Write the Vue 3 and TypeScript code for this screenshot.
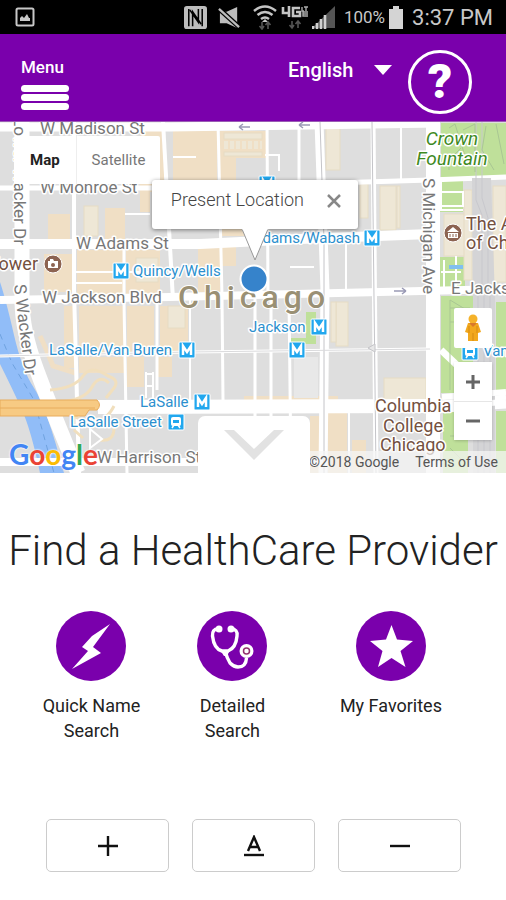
<script setup lang="ts">
import { ref } from 'vue'

type Rect = [number, number, number, number]
interface Label { text: string; x: number; y: number; kind: string; anchor?: string }

const language = ref('English')
const popupOpen = ref(true)
const mapType = ref('Map')

const peach: Rect[] = [
  [173, 131, 44, 49], [220, 131, 46, 27], [220, 158, 16, 22], [140, 130, 24, 62],
  [48, 214, 22, 26], [105, 208, 20, 32], [140, 190, 10, 22], [44, 254, 28, 38],
  [77, 250, 48, 45], [126, 250, 34, 45], [198, 246, 22, 46], [222, 246, 14, 20],
  [222, 228, 46, 8], [64, 306, 12, 62], [79, 306, 45, 48], [79, 357, 45, 16],
  [127, 306, 27, 48], [127, 357, 17, 30], [160, 306, 28, 48], [244, 396, 78, 5],
  [326, 396, 12, 5], [310, 416, 10, 57], [328, 412, 19, 61], [352, 440, 14, 33],
  [158, 357, 14, 20],
]
const cream: Rect[] = [
  [224, 133, 38, 6], [224, 152, 38, 4], [326, 128, 14, 42], [360, 184, 8, 34],
  [380, 186, 16, 44], [397, 186, 3, 42], [84, 206, 14, 30], [168, 306, 17, 22],
  [336, 302, 12, 44], [384, 378, 42, 22], [444, 214, 26, 42], [464, 190, 8, 90],
  [493, 186, 13, 96], [331, 302, 5, 40], [136, 258, 22, 24],
]
const green: Rect[] = [
  [441, 123, 65, 54], [440, 180, 23, 32], [440, 257, 25, 30], [441, 296, 33, 97],
  [443, 411, 25, 62], [496, 302, 10, 92], [496, 411, 10, 62], [291, 338, 25, 6], [306, 312, 10, 32],
]

const roads: { d: string; w: number }[] = [
  { d: 'M0 127H170L440 123', w: 9 },
  { d: 'M0 188H150L300 184L430 180L506 177', w: 5 },
  { d: 'M0 244H200L300 239L430 234', w: 10 },
  { d: 'M0 300L170 297L506 289', w: 8 },
  { d: 'M0 356L190 352L430 349', w: 3 },
  { d: 'M98 407L430 406', w: 14 },
  { d: 'M430 404L506 397M430 411L506 406', w: 5 },
  { d: 'M0 462H320', w: 8 },
  { d: 'M22 122V300Q22 330 36 368T78 473', w: 15 },
  { d: 'M74 122V290L79 473', w: 4 },
  { d: 'M124 246V302L127 473', w: 3 },
  { d: 'M76 272H160M76 283H122M125 214H150', w: 2 },
  { d: 'M163 122L173 300', w: 4 },
  { d: 'M157 298V390', w: 3 },
  { d: 'M218 122L222 296L223 400', w: 3 },
  { d: 'M190 300V400', w: 2 },
  { d: 'M267 122L268 296', w: 3 },
  { d: 'M255 298V473M271 298V473M289 298L291 473', w: 3 },
  { d: 'M299 122V180', w: 3 },
  { d: 'M319 122L325 290L323 473', w: 9 },
  { d: 'M373 122L376 473', w: 5 },
  { d: 'M401 124V180M346 244V290M349 410V473', w: 2 },
  { d: 'M433 122V473', w: 14 },
  { d: 'M441 350L460 368', w: 7 },
  { d: 'M146 372V398M153 372V398M146 374H154M146 386H154', w: 2 },
  { d: 'M173 157H196M265 155H279V171M290 267H314', w: 2 },
]

const labels: Label[] = [
  { text: 'W Madison St', x: 40, y: 134, kind: 'street' },
  { text: 'W Monroe St', x: 40, y: 193, kind: 'street' },
  { text: 'W Adams St', x: 76, y: 249, kind: 'street' },
  { text: 'W Jackson Blvd', x: 42, y: 303, kind: 'street' },
  { text: 'W Harrison St', x: 97, y: 463, kind: 'street' },
  { text: 'E Jackson Dr', x: 451, y: 294, kind: 'street' },
  { text: 'Willis Tower', x: 38, y: 270, kind: 'place', anchor: 'end' },
  { text: 'The Art Institute', x: 466, y: 230, kind: 'place' },
  { text: 'of Chicago', x: 466, y: 249, kind: 'place' },
  { text: 'Columbia', x: 375, y: 412, kind: 'place' },
  { text: 'College', x: 383, y: 432, kind: 'place' },
  { text: 'Chicago', x: 380, y: 451, kind: 'place' },
  { text: 'Crown', x: 452, y: 145, kind: 'park', anchor: 'middle' },
  { text: 'Fountain', x: 452, y: 165, kind: 'park', anchor: 'middle' },
  { text: 'Quincy/Wells', x: 133, y: 276, kind: 'transit' },
  { text: 'Adams/Wabash', x: 360, y: 243, kind: 'transit', anchor: 'end' },
  { text: 'Jackson', x: 249, y: 332, kind: 'transit' },
  { text: 'LaSalle/Van Buren', x: 49, y: 355, kind: 'transit' },
  { text: 'LaSalle', x: 140, y: 407, kind: 'transit' },
  { text: 'LaSalle Street', x: 70, y: 427, kind: 'transit' },
  { text: 'Van Buren', x: 483, y: 356, kind: 'transit' },
]

const metros: [number, number][] = [[121, 271], [372, 238], [319, 327], [297, 350], [187, 350], [202, 402], [267, 184]]
const trains: [number, number][] = [[176, 422], [470, 352]]
</script>

<template>
  <div class="screen">
    <div class="status">
      <svg class="shot" viewBox="0 0 20 20" aria-hidden="true">
        <rect x="1.5" y="1.5" width="17" height="17" rx="1.5" fill="none" stroke="#c8c8c8" stroke-width="2" />
        <path d="M5 14V11l2-2 2 2 3-4 2 4 1 0v3z" fill="#c8c8c8" />
      </svg>
      <svg class="nfc" viewBox="0 0 24 24" aria-hidden="true">
        <rect x="0" y="0" width="24" height="24" rx="3" fill="#bdbdbd" />
        <path d="M5 3v18M19 3v18" stroke="#000" stroke-width="1.6" />
        <path d="M9 21V6l9 13M15 3v14L6 4" fill="none" stroke="#000" stroke-width="1.6" />
      </svg>
      <svg class="mute" viewBox="0 0 24 24" aria-hidden="true">
        <path d="M2 6h7l11-5v22L9 18H2z" fill="#bdbdbd" />
        <path d="M1 3l21 19" stroke="#000" stroke-width="5" />
        <path d="M1 3l21 19" stroke="#bdbdbd" stroke-width="2.4" />
      </svg>
      <svg class="wifi" viewBox="0 0 24 26" aria-hidden="true">
        <path d="M1 7q11-9 22 0M4.500 11q7.500-6 15 0M8 15q4-3 8 0" fill="none" stroke="#c4c4c4" stroke-width="2.5" />
        <path d="M9 18h6l-3-3z" fill="#c4c4c4" />
        <path d="M9 18v7M6.500 22l2.500 3 2-3M15 25v-7M12.500 21l2.500-3 2.500 3" fill="none" stroke="#555" stroke-width="1.6" />
      </svg>
      <svg class="lte" viewBox="0 0 28 26" aria-hidden="true">
        <path d="M2 3v6h7M8 2v11M19 4h-7v8h7V8h-4" fill="none" stroke="#c4c4c4" stroke-width="2.6" />
        <path d="M21 3v4h2M23 3h4M25 3v4M27 8h-5v4h5M22 10h5" fill="none" stroke="#aaa" stroke-width="1.4" />
        <path d="M11 17v7M8.500 21l2.500 3 2-3M17 24v-7M14.500 20l2.500-3 2.500 3" fill="none" stroke="#555" stroke-width="1.6" />
      </svg>
      <svg class="signal" viewBox="0 0 24 24" aria-hidden="true">
        <path d="M0 23L23 1V23z" fill="#555" />
        <path d="M1 21v3M5 18v6M9 14v10M13 10v14" stroke="#d0d0d0" stroke-width="2.6" />
      </svg>
      <span class="percent">100%</span>
      <svg class="battery" viewBox="0 0 14 23" aria-hidden="true">
        <path d="M4 0h6v3h4v20H0V3h4z" fill="#d4d4d4" />
      </svg>
      <span class="clock">3:37 PM</span>
    </div>

    <header class="bar">
      <button class="menu" type="button">
        <span>Menu</span>
        <span class="lines" aria-hidden="true"><i></i><i></i><i></i></span>
      </button>
      <div class="lang">
        <select v-model="language" aria-label="Language">
          <option>English</option>
        </select>
        <svg viewBox="0 0 18 10" aria-hidden="true"><path d="M0 0h18L9 10z" fill="#fff" /></svg>
      </div>
      <button class="help" type="button">?</button>
    </header>

    <section class="map">
      <svg class="tiles" viewBox="0 122 506 351" preserveAspectRatio="xMidYMid slice">
        <rect x="0" y="122" width="506" height="351" fill="#dedede" />
        <rect v-for="(r, i) in peach" :key="'p' + i" :x="r[0]" :y="r[1]" :width="r[2]" :height="r[3]" fill="#f0dfc5" />
        <rect v-for="(r, i) in green" :key="'g' + i" :x="r[0]" :y="r[1]" :width="r[2]" :height="r[3]" fill="#bfe09a" />
        <rect v-for="(r, i) in cream" :key="'c' + i" :x="r[0]" :y="r[1]" :width="r[2]" :height="r[3]" fill="#eee7d6" stroke="#e6dcc4" />
        <rect x="294" y="357" width="24" height="41" fill="#e8e8e8" />
        <path d="M224 145h38" stroke="#eee7d6" stroke-width="8" stroke-dasharray="4 2" />
        <path d="M76 373l-23-7q-8-20-13-30" fill="none" stroke="#f0dfc5" stroke-width="5" />
        <path d="M0 282Q6 300 14 335T34 388T64 473H40Q31 430 22 410T0 364z" fill="#91bdf8" />
        <path d="M0 334L12 363L34 400L54 473" fill="none" stroke="#6fa2df" stroke-dasharray="6 5" />
        <path v-for="(r, i) in roads" :key="'r' + i" :d="r.d" :stroke-width="r.w" fill="none" stroke="#fff" />
        <path d="M50 390q25-2 33-14t25 0q12 4 6 12l-8 10M60 402q25-2 32-15t17-4M70 414q8 6 22 7t22-15M74 430l9 8M100 440q14 2 14-12" fill="none" stroke="#f1dfbd" stroke-width="3" />
        <path d="M0 400h97q5 5 0 10h-8l-4 6H0z" fill="#f7ca83" stroke="#e8ac5c" />
        <path d="M0 408h95" stroke="#e8ac5c" />
        <path d="M90 429l12 10-12 9z" fill="#dedede" stroke="#fff" stroke-width="2" />
        <path d="M320 122L324 240L324 473M372 122L376 473" fill="none" stroke="#c4c4c8" />
        <path d="M0 356L190 352L430 349" fill="none" stroke="#dadadc" />
        <path d="M472 178h19l4 122v173h-22V300z" fill="#d4d4d6" />
        <path d="M476 122V200L482 215V295M482 122V198L488 218V296M478 296V473M484 296V473M490 296V473" fill="none" stroke="#c8c8cd" />
        <path d="M449 128l6-4 10 32M463 130l12-6v48M486 126l-4 24 12 20M496 124l8 40M449 170V160l12-12M450 308h20M450 322h20M450 390V300l20 12M450 436h18M450 448l12 12" fill="none" stroke="#a9c793" />
        <path d="M441 192h22v14h-22M441 180v30h22M444 260v30M441 272h20M456 256v34" fill="none" stroke="#fff" stroke-width="2" />
        <path d="M449 267h14" stroke="#80bff0" stroke-width="4" />
        <path d="M442 397L506 392M442 406L506 402" stroke="#fff" stroke-width="6" />
        <path d="M239 127h11M239 127l4-3M239 127l4 3M299 125h11M299 125l4-3M299 125l4 3M394 291h12M406 291l-4-3M406 291l-4 3" fill="none" stroke="#9a9ab5" stroke-width="1.5" />
        <path d="M368 348l7-4v8z" fill="#e8e8e8" stroke="#c4c4c8" />

        <g v-for="(m, i) in metros" :key="'m' + i">
          <rect :x="m[0] - 8" :y="m[1] - 8" width="16" height="16" rx="1" fill="#21a7ee" stroke="#fff" />
          <path :d="`M${m[0] - 4} ${m[1] + 5}v-9l4 6 4-6v9`" fill="none" stroke="#fff" stroke-width="2.5" />
        </g>
        <g v-for="(t, i) in trains" :key="'t' + i">
          <rect :x="t[0] - 8" :y="t[1] - 8" width="16" height="16" rx="1" fill="#21a7ee" stroke="#fff" />
          <rect :x="t[0] - 5" :y="t[1] - 5" width="10" height="9" rx="2" fill="#fff" />
          <path :d="`M${t[0] - 3} ${t[1] - 2}h6v3h-6z`" fill="#21a7ee" />
          <path :d="`M${t[0] - 4} ${t[1] + 6}l2-3M${t[0] + 4} ${t[1] + 6}l-2-3`" stroke="#fff" stroke-width="1.5" />
        </g>
        <circle cx="53" cy="264" r="9" fill="#8c6351" stroke="#fff" />
        <path d="M48 261h2v-2h3l1 2h4v7H48z" fill="#fff" />
        <circle cx="53" cy="265" r="2" fill="#8c6351" />
        <circle cx="453" cy="233" r="9" fill="#8c6351" stroke="#fff" />
        <path d="M447 232l6-5 6 5zM448 233h10v5h-10z" fill="#fff" />
        <path d="M450 234v3M453 234v3M456 234v3" stroke="#8c6351" />

        <text v-for="l in labels" :key="l.text + l.y" :class="l.kind" :x="l.x" :y="l.y" :text-anchor="l.anchor ?? 'start'">{{ l.text }}</text>
        <text class="street" text-anchor="end" transform="translate(14 245) rotate(90)">Lower Wacker Dr</text>
        <text class="street" transform="translate(14 285) rotate(83)">S Wacker Dr</text>
        <text class="street" transform="translate(423 178) rotate(90)">S Michigan Ave</text>
        <text class="city" x="178" y="308">Chicago</text>
        <circle cx="254" cy="279" r="13.5" fill="#3683cb" stroke="#fff" stroke-width="2" />
      </svg>

      <div class="types">
        <button type="button" :class="{ on: mapType === 'Map' }" @click="mapType = 'Map'">Map</button>
        <button type="button" :class="{ on: mapType === 'Satellite' }" @click="mapType = 'Satellite'">Satellite</button>
      </div>

      <div v-if="popupOpen" class="popup">
        <span>Present Location</span>
        <button type="button" aria-label="Close" @click="popupOpen = false">
          <svg viewBox="0 0 14 14"><path d="M1 1l12 12M13 1L1 13" stroke="#888" stroke-width="2.5" /></svg>
        </button>
        <svg class="tail" viewBox="0 0 30 34" aria-hidden="true">
          <path d="M2 1L15 32L28 1" fill="#fff" stroke="#999" />
          <path d="M2 0h26" stroke="#fff" stroke-width="3" />
        </svg>
      </div>

      <div class="controls">
        <button class="pegman" type="button" aria-label="Street View">
          <svg viewBox="0 0 18 28">
            <path d="M4 9h10l3 9-3 1v8H4v-8l-3-1z" fill="#f2a81d" />
            <circle cx="9" cy="5" r="4.5" fill="#f5b22a" />
            <path d="M5 9l4 4 4-4z" fill="#d9792a" />
            <path d="M9 19v8M5 12v7M13 12v7" stroke="#d58a12" />
          </svg>
        </button>
        <div class="zoom">
          <button type="button" aria-label="Zoom in"><svg viewBox="0 0 14 14"><path d="M0 7h14M7 0v14" stroke="#666" stroke-width="3" /></svg></button>
          <button type="button" aria-label="Zoom out"><svg viewBox="0 0 14 14"><path d="M0 7h14" stroke="#666" stroke-width="3" /></svg></button>
        </div>
      </div>

      <a class="google" href="#"><b class="bl">G</b><b class="rd">o</b><b class="yl">o</b><b class="bl">g</b><b class="gr">l</b><b class="rd">e</b></a>
      <div class="credits"><span>©2018 Google</span><a href="#">Terms of Use</a></div>
      <button class="pull" type="button" aria-label="Expand map">
        <svg viewBox="0 0 60 30"><path d="M0 0h10l20 19L50 0h10L30 30z" fill="#e2e2e2" /></svg>
      </button>
    </section>

    <main>
      <h1>Find a HealthCare Provider</h1>
      <nav class="actions">
        <a href="#">
          <svg viewBox="0 0 70 70" aria-hidden="true">
            <circle cx="35" cy="35" r="35" fill="#7a00ac" />
            <path d="M54 13L36 25L26 36l6 4L16 58l29-16-8-6z" fill="#fff" />
          </svg>
          <span>Quick Name Search</span>
        </a>
        <a href="#">
          <svg viewBox="0 0 70 70" aria-hidden="true">
            <circle cx="35" cy="35" r="35" fill="#7a00ac" />
            <path d="M21 18q-6 0-5.500 7Q17 38 25 40h6Q39 37 40 25q1-7-6-7M28 40q2 7 5 12 4 4 8 4 8 0 8.500-9" fill="none" stroke="#fff" stroke-width="3.4" />
            <path d="M23 39h10l-3 6h-3z" fill="#fff" />
            <circle cx="22" cy="18" r="3.5" fill="#fff" />
            <circle cx="34" cy="18" r="3.5" fill="#fff" />
            <circle cx="49.5" cy="40" r="7" fill="#fff" />
            <circle cx="49.5" cy="40" r="3" fill="#fff" stroke="#93306f" stroke-width="1.5" />
          </svg>
          <span>Detailed Search</span>
        </a>
        <a href="#">
          <svg viewBox="0 0 70 70" aria-hidden="true">
            <circle cx="35" cy="35" r="35" fill="#7a00ac" />
            <path d="M35.500 14L41 28.500L57 30L44.500 40L49.500 56L35.500 47L22 56L26.500 40L14 30L30 28.500z" fill="#fff" />
          </svg>
          <span>My Favorites</span>
        </a>
      </nav>
      <div class="sizes">
        <button type="button" aria-label="Larger text"><svg viewBox="0 0 22 22"><path d="M1 11h20M11 1v20" stroke="#111" stroke-width="2.4" /></svg></button>
        <button type="button" aria-label="Default text size"><svg viewBox="0 0 22 22"><path d="M5 16L11 2l6 14M7 12h8" fill="none" stroke="#111" stroke-width="2.4" /><path d="M1 20h20" stroke="#111" stroke-width="2.4" /></svg></button>
        <button type="button" aria-label="Smaller text"><svg viewBox="0 0 22 22"><path d="M1 11h20" stroke="#111" stroke-width="2.4" /></svg></button>
      </div>
    </main>
  </div>
</template>

<style>
body { background: #fff; }
</style>

<style scoped>
.screen { font-family: Roboto, "Liberation Sans", sans-serif; color: #222; }
button { font: inherit; color: inherit; border: 0; background: none; padding: 0; cursor: pointer; }
a { color: inherit; text-decoration: none; }
svg { display: block; flex: none; }

.status { display: flex; align-items: center; height: 34px; padding: 0 13px 0 15px; background: #000; color: #c8c8c8; }
.shot { width: 20px; height: 20px; margin-right: auto; }
.nfc { width: 23px; height: 23px; margin-right: 11px; }
.mute { width: 23px; height: 23px; margin-right: 12px; }
.wifi { width: 24px; height: 26px; margin-right: 4px; }
.lte { width: 28px; height: 26px; margin-right: 3px; }
.signal { width: 24px; height: 24px; margin-right: 8px; }
.percent { font-size: 17px; margin-right: 4px; }
.battery { width: 14px; height: 23px; margin-right: 9px; }
.clock { font-size: 22px; }

.bar { display: flex; align-items: flex-start; height: 71px; padding: 16px 34px 0 21px; background: #7a00ac; color: #fff; border-bottom: 1px solid #9a5cb4; }
.menu { display: flex; flex-direction: column; gap: 7px; margin: 6px auto 0 0; font-size: 17px; font-weight: 500; line-height: 22px; text-align: left; }
.lines { display: flex; flex-direction: column; gap: 2px; }
.lines i { width: 48px; height: 7px; border-radius: 4px; background: #fff; }
.lang { display: grid; align-items: center; margin: 7px 16px 0 0; }
.lang > * { grid-area: 1 / 1; }
.lang select { width: 104px; height: 26px; padding: 0; border: 0; appearance: none; background: none; color: #fff; font: 500 20px/26px Roboto, sans-serif; }
.lang option { color: #222; }
.lang svg { width: 18px; height: 10px; justify-self: end; pointer-events: none; }
.help { width: 64px; height: 64px; border: 3px solid #fff; border-radius: 50%; font-size: 48px; font-weight: 900; line-height: 56px; }

.map { position: relative; aspect-ratio: 506 / 351; overflow: hidden; }
.tiles { width: 100%; height: 100%; }
.tiles text { paint-order: stroke; stroke: #fff; stroke-width: 3px; stroke-linejoin: round; }
.street { font-size: 17px; fill: #777; }
.place { font-size: 18px; fill: #74513f; }
.park { font-size: 19px; font-style: italic; fill: #3f8a1f; }
.transit { font-size: 15px; fill: #2b8fce; }
.tiles .city { font-size: 32px; font-weight: 500; fill: #9a9074; letter-spacing: 5px; stroke-width: 2px; }

.types { position: absolute; left: 14px; top: 14px; display: flex; height: 48px; background: #fff; border-radius: 2px; }
.types button { padding: 0 15px; font-size: 15px; color: #777; }
.types button + button { border-left: 1px solid #eee; }
.types .on { padding: 0 16px; color: #222; font-weight: 700; }

.popup { position: absolute; left: 30%; top: 58px; box-sizing: border-box; display: flex; align-items: center; width: 206px; height: 49px; padding: 0 17px 7px 19px; background: #fff; border-radius: 3px; box-shadow: 0 1px 4px #0007; font-size: 18px; line-height: 24px; font-weight: 300; color: #444; white-space: nowrap; }
.popup span { padding-bottom: 3px; }
.popup button { margin-left: auto; }
.popup button svg { width: 14px; height: 14px; }
.tail { position: absolute; left: 88px; top: 48px; width: 30px; height: 34px; }

.controls { position: absolute; right: 14px; top: 186px; display: flex; flex-direction: column; gap: 14px; width: 38px; }
.controls button { display: grid; place-items: center; width: 38px; height: 40px; background: #fff; }
.pegman { border-radius: 2px; }
.pegman svg { width: 18px; height: 28px; }
.zoom { border-radius: 2px; box-shadow: 0 1px 3px #0003; }
.zoom button { height: 39px; }
.zoom button + button { border-top: 1px solid #e6e6e6; }
.zoom svg { width: 14px; height: 14px; }

.google { position: absolute; left: 9px; bottom: 2px; font: 28px/34px Lato, sans-serif; text-shadow: 0 0 2px #fff, 0 0 2px #fff; }
.google b { font-weight: 700; }
.bl { color: #4285f4; }
.rd { color: #ea4335; }
.yl { color: #fbbc05; }
.gr { color: #34a853; }
.credits { position: absolute; right: 0; bottom: 0; display: flex; gap: 16px; padding: 0 8px 0 2px; background: #f5f5f5bb; font-size: 14px; line-height: 22px; color: #555; }
.pull { position: absolute; left: 50%; bottom: 0; display: grid; justify-items: center; align-content: start; width: 112px; height: 57px; margin-left: -55px; padding-top: 14px; background: #fff; border-radius: 7px 7px 0 0; }
.pull svg { width: 60px; height: 30px; }

main { display: flex; flex-direction: column; }
h1 { margin: 52px 0 34px; font-size: 42px; font-weight: 300; line-height: 52px; text-align: center; white-space: nowrap; color: #222; }
.actions { display: grid; grid-template-columns: 28fr 28fr 35fr; padding: 0 27px 0 21px; font-size: 18px; line-height: 25px; text-align: center; }
.actions a { display: flex; flex-direction: column; align-items: center; gap: 12px; }
.actions svg { width: 70px; height: 70px; }
.actions span { max-width: 100px; }
.actions a:last-child span { max-width: none; }
.sizes { display: grid; grid-template-columns: repeat(3, 1fr); gap: 23px; padding: 76px 45px 28px 46px; }
.sizes button { display: grid; place-items: center; height: 53px; border: 1px solid #ccc; border-radius: 5px; }
.sizes svg { width: 22px; height: 22px; }
</style>
